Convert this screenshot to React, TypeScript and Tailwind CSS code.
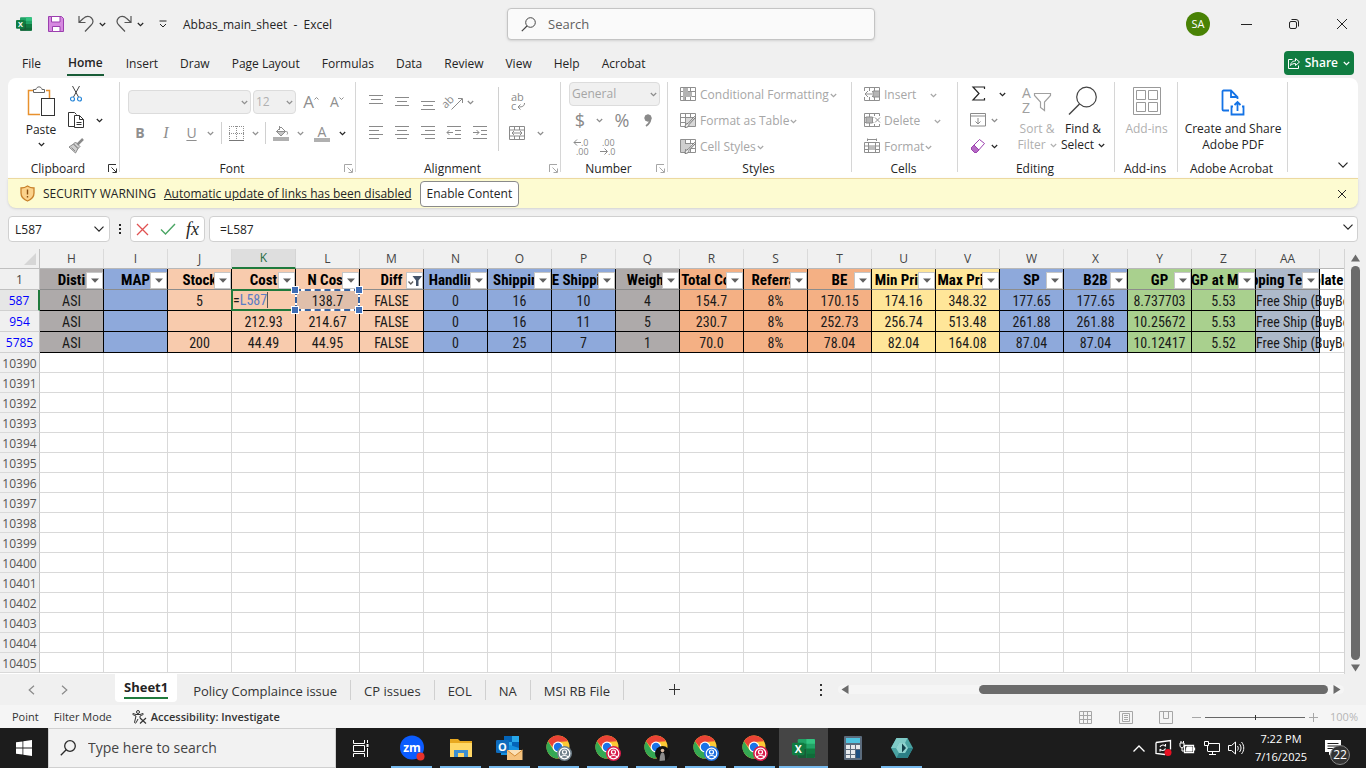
import React from "react";
import type { ReactNode } from "react";

type SvgProps = { w: number; h?: number; className?: string; children: ReactNode; sw?: number };

function Icon({ w, h = w, className = "", children, sw = 1 }: SvgProps) {
  return (
    <svg
      width={w}
      height={h}
      viewBox={`0 0 ${w} ${h}`}
      fill="none"
      stroke="currentColor"
      strokeWidth={sw}
      className={`shrink-0 overflow-visible ${className}`}
      aria-hidden="true"
    >
      {children}
    </svg>
  );
}

function Chev({ className = "" }: { className?: string }) {
  return (
    <Icon w={7} h={5} className={className}>
      <path d="M.8 1 3.5 3.6 6.2 1" strokeWidth="1.2" />
    </Icon>
  );
}

function BigChev({ className = "" }: { className?: string }) {
  return (
    <Icon w={10} h={6} className={className}>
      <path d="M.5.7 5 5.2 9.5.7" strokeWidth="1.2" />
    </Icon>
  );
}

function ExcelLogo({ size }: { size: number }) {
  return (
    <svg width={size} height={size} viewBox="0 0 24 24" className="shrink-0" aria-hidden="true">
      <rect x="6" y="2" width="18" height="20" rx="1.5" fill="#21a366" />
      <path d="M15 2h7.500a1.500 1.500 0 0 1 1.500 1.500V7h-9z" fill="#33c481" />
      <path d="M6 7h9v5H6z" fill="#107c41" />
      <path d="M15 12h9v5h-9z" fill="#107c41" />
      <path d="M6 12h9v10H7.500A1.500 1.500 0 0 1 6 20.500z" fill="#185c37" />
      <path d="M15 17h9v3.500a1.500 1.500 0 0 1-1.500 1.500H15z" fill="#0f6b38" />
      <rect x="0" y="6" width="13" height="13" rx="1.500" fill="#107c41" />
      <text x="6.500" y="16.500" textAnchor="middle" fontSize="11" fontWeight="700" fill="#fff" fontFamily="Open Sans, sans-serif">
        X
      </text>
    </svg>
  );
}

function Launcher({ dim = true }: { dim?: boolean }) {
  return (
    <button type="button" aria-label="More options" className={dim ? "text-[#a6a6a6]" : "text-[#333333]"}>
      <Icon w={9}>
        <path d="M.5 8V.5H8M3.500 3.500l4.500 4.500M8.500 4.500v4h-4" />
      </Icon>
    </button>
  );
}

function Group({ name, width, launcher, children }: { name: string; width: string; launcher?: "dim" | "on"; children: ReactNode }) {
  return (
    <section aria-label={name} className={`relative flex shrink-0 flex-col pt-[3px] ${width}`}>
      <div className="h-[78px]">{children}</div>
      <div className="flex h-[18px] items-center pr-[3px]">
        <span className="flex-1 pt-px text-center whitespace-nowrap text-[#242424]">{name}</span>
        {launcher && <Launcher dim={launcher === "dim"} />}
      </div>
      <span className="absolute top-1 right-0 h-[90px] w-px bg-[#d6d6d6]" />
    </section>
  );
}

function Tool({ label, width = "w-[26px]", className = "", children }: { label: string; width?: string; className?: string; children: ReactNode }) {
  return (
    <button type="button" aria-label={label} className={`flex h-[26px] shrink-0 items-center justify-center ${width} ${className}`}>
      {children}
    </button>
  );
}

function LineIcon({ rows }: { rows: [number, number, number][] }) {
  return (
    <Icon w={16}>
      {rows.map(([y, a, b]) => (
        <path key={y} d={`M${a} ${y}H${b}`} />
      ))}
    </Icon>
  );
}

type TableKind = "cond" | "table" | "cell" | "insert" | "delete" | "format";

function TableIcon({ kind }: { kind: TableKind }) {
  return (
    <Icon w={16} className="text-[#8f8f8f]">
      {kind === "format" ? (
        <>
          <path d="M.5 4.500h15v10H.5zM.5 8h15M.5 11.500h15M4.500 4.500v10M11.500 4.500v10M3.500 3V.5M12.500 3V.5M4 1.500h8" />
          <path d="M5 8h6v4H5z" fill="#bdbdbd" stroke="none" />
        </>
      ) : (
        <>
          <path d="M.5 1.500h15v13H.5zM.5 5.500h15M.5 10.500h15M5.500 1.500v13M10.500 1.500v13" />
          {kind === "cond" && <path d="M3 2h5v4h4v5H5v3H3z" fill="#b3b3b3" stroke="none" />}
          {kind === "table" && <path d="M6 6h9v8H6z" fill="#d8d8d8" stroke="none" />}
          {kind === "cell" && <path d="M1 2h4v12H1zM5 6h6v5H5z" fill="#cfcfcf" stroke="none" />}
          {(kind === "table" || kind === "cell") && <path d="M5 15.500c0-3 1.500-4 3-4l6.500-7 1 1-6.500 7c0 2-1.500 3-4 3z" fill="#efefef" stroke="#777" />}
          {kind === "insert" && (
            <>
              <path d="M0 5h8v6H0z" fill="#fff" stroke="none" />
              <path d="M9 5h6.500v6H9z" fill="#b5b5b5" />
              <path d="M8 8H1M4 5 1 8l3 3" />
            </>
          )}
          {kind === "delete" && (
            <>
              <path d="M9.500 4H16v8H9.500z" fill="#fff" stroke="none" />
              <path d="M2 5h6.500v6H2z" fill="#b5b5b5" />
              <path d="m11 5.500 5 5M16 5.500l-5 5" />
            </>
          )}
        </>
      )}
    </Icon>
  );
}

function TextTool({ kind, label, gap = "gap-1" }: { kind: TableKind; label: string; gap?: string }) {
  return (
    <button type="button" className="flex h-[26px] items-center gap-1 whitespace-nowrap text-[#a6a6a6]">
      <TableIcon kind={kind} />
      <span className={`flex items-center pt-[2px] ${gap}`}>
        {label}
        <Chev />
      </span>
    </button>
  );
}

function Divider({ h = "h-[22px]" }: { h?: string }) {
  return <span className={`w-px shrink-0 bg-[#d0d0d0] ${h}`} />;
}

const tabs = ["File", "Home", "Insert", "Draw", "Page Layout", "Formulas", "Data", "Review", "View", "Help", "Acrobat"];

function TitleBar() {
  return (
    <header className="flex h-12 shrink-0 items-center text-[#242424]">
      <div className="flex w-[507px] shrink-0 items-center pl-4">
        <ExcelLogo size={16} />
        <button type="button" aria-label="Save" className="ml-4">
          <Icon w={16}>
            <path d="M.5.5h13l2 2v13H.5z" fill="#d689e0" stroke="#9b3fae" />
            <path d="M3.500.5h8.500v5.500H3.500z" fill="#fff" stroke="#9b3fae" />
            <path d="M4.500 15.500v-5h7.500v5z" fill="#fff" stroke="#9b3fae" />
          </Icon>
        </button>
        <button type="button" aria-label="Undo" className="ml-[14px] flex items-center gap-[5px]">
          <Icon w={16} className="text-[#555]">
            <path d="M1 0v6.500h6.500M1.200 6.300 5.500 2.300C8-.2 11.500-.2 13.500 2c2 2.300 1.700 5-.3 7L7 15.500" strokeWidth="1.2" />
          </Icon>
          <Chev />
        </button>
        <button type="button" aria-label="Redo" className="ml-[10px] flex items-center gap-[5px]">
          <Icon w={16} className="text-[#555]">
            <path d="M15 0v6.500H8.500M14.800 6.300 10.500 2.300C8-.2 4.500-.2 2.500 2c-2 2.300-1.700 5 .3 7L9 15.500" strokeWidth="1.2" />
          </Icon>
          <Chev />
        </button>
        <button type="button" aria-label="Customize toolbar" className="ml-[15px]">
          <Icon w={8}>
            <path d="M.5 1h7M1 4l3 3 3-3" />
          </Icon>
        </button>
        <h1 className="ml-4 pt-[2px] text-xs whitespace-pre">Abbas_main_sheet  -  Excel</h1>
      </div>
      <label className="flex h-8 w-[368px] shrink-0 items-center gap-3 rounded border border-[#c4c4c4] bg-[#fafafa] px-[13px] shadow-sm">
        <Icon w={15} className="text-[#444]">
          <circle cx="9.500" cy="5.500" r="4.800" />
          <path d="M6 9 .8 14.200" strokeWidth="1.2" />
        </Icon>
        <input aria-label="Search" placeholder="Search" className="w-full bg-transparent pt-[2px] text-[13px] outline-none placeholder:text-[#616161]" />
      </label>
      <div className="ml-auto flex items-center pr-[18px]">
        <button type="button" className="mr-[31px] flex size-6 items-center justify-center rounded-full bg-[#498205] text-[11px] text-white">SA</button>
        <button type="button" aria-label="Minimize" className="mr-[37px]">
          <Icon w={11}><path d="M0 5.500h11" /></Icon>
        </button>
        <button type="button" aria-label="Restore" className="mr-[37px]">
          <Icon w={10}>
            <rect x=".5" y="2.500" width="7" height="7" rx="1.500" />
            <path d="M2.500.5H7A2.500 2.500 0 0 1 9.500 3v4.500" />
          </Icon>
        </button>
        <button type="button" aria-label="Close">
          <Icon w={12}><path d="m1 1 10 10M11 1 1 11" /></Icon>
        </button>
      </div>
    </header>
  );
}

function TabBar() {
  return (
    <nav className="flex h-[30px] shrink-0 items-center pr-3 pl-[22px] text-[#242424]">
      <div className="flex items-center gap-[22px] pt-[2px] text-xs">
        {tabs.map((t) => (
          <a
            key={t}
            href="#"
            className={
              t === "Home"
                ? "ml-1 border-b-2 border-[#185c37] px-px leading-[22px] font-semibold whitespace-nowrap"
                : "leading-5 whitespace-nowrap"
            }
          >
            {t}
          </a>
        ))}
      </div>
      <button type="button" className="ml-auto flex h-6 items-center gap-[5px] rounded bg-[#107c41] px-1 text-xs font-semibold text-white">
        <Icon w={12}>
          <path d="M4.500 2.500h-4v9h10v-3" />
          <path d="M2.500 8.500C3 5 5 4 7.500 4V1.500l4 3.500-4 3.500V6.500c-2 0-3.500.5-5 2z" />
        </Icon>
        Share
        <Chev />
      </button>
    </nav>
  );
}

function Ribbon() {
  return (
    <div className="flex h-[100px] overflow-hidden rounded-t-lg bg-white text-xs leading-4 text-[#242424]">
      <Group name="Clipboard" width="w-[112px]" launcher="on">
        <div className="flex">
          <button type="button" className="ml-3 flex w-[42px] flex-col items-center pt-[5px]">
            <Icon w={28} h={31}>
              <path d="M7 4.500H1.500v24H13M19 4.500h3.500V12" stroke="#e8912d" strokeWidth="1.500" />
              <path d="M6.500 6.500v-3H9c.5-3.500 5.500-3.500 6 0h2.500v3z" fill="#fff" stroke="#666" />
              <rect x="14.500" y="12.500" width="13" height="17" fill="#fff" stroke="#333" />
            </Icon>
            <span className="mt-[5px]">Paste</span>
            <Chev className="mt-1" />
          </button>
          <div className="ml-[6px]">
            <Tool label="Cut" width="w-4">
              <Icon w={12} h={16}>
                <path d="M2.500 0 8.500 11M9.500 0l-6 11" stroke="#444" />
                <circle cx="2.500" cy="13" r="2" stroke="#2b88d8" strokeWidth="1.200" />
                <circle cx="9.500" cy="13" r="2" stroke="#2b88d8" strokeWidth="1.200" />
              </Icon>
            </Tool>
            <Tool label="Copy" width="w-[35px]" className="gap-[11px]">
              <Icon w={17} h={16} className="text-[#333]">
                <path d="M6.500 14.500h-6V.5h6l2 2" />
                <path d="M6.500 3.500h5l4 4v8h-9zM11.500 3.500v4h4M8.500 10.500h5M8.500 12.500h5" />
              </Icon>
              <Chev />
            </Tool>
            <Tool label="Format Painter" width="w-4">
              <Icon w={16} className="text-[#8a8a8a]">
                <path d="M1 9 7.500 15l2.500-4.500L5.500 6zM5.500 6l4.500 4.500 2-2L7.500 4zM3.500 9.500l3.500 3.500" fill="#d0d0d0" />
                <path d="m15 1-5.500 5.500" strokeWidth="2.500" />
              </Icon>
            </Tool>
          </div>
        </div>
      </Group>

      <Group name="Font" width="w-[236px]" launcher="dim">
        <div className="flex flex-col gap-[5px] px-2 pt-2 text-[#8f8f8f]">
          <div className="flex h-[26px] items-center">
            <span className="relative flex items-center">
              <select aria-label="Font" className="h-6 w-[123px] appearance-none rounded border border-[#dcdcdc] bg-[#f0f0f0]">
                <option />
              </select>
              <Chev className="absolute right-[3px]" />
            </span>
            <span className="relative ml-[2px] flex items-center">
              <select aria-label="Font size" className="h-6 w-[43px] appearance-none rounded border border-[#dcdcdc] bg-[#f0f0f0] pl-[2px] text-[#b0b0b0]">
                <option>12</option>
              </select>
              <Chev className="absolute right-[3px]" />
            </span>
            <Tool label="Increase font size" width="w-[26px]" className="ml-[2px]">
              <span className="text-[17px]">A</span>
              <Icon w={5} h={12}><path d="m.5 3.500 2-2 2 2" /></Icon>
            </Tool>
            <Tool label="Decrease font size" width="w-[26px]">
              <span className="text-sm">A</span>
              <Icon w={5} h={12}><path d="m.5 1.500 2 2 2-2" /></Icon>
            </Tool>
          </div>
          <div className="flex h-[26px] items-center text-sm">
            <Tool label="Bold" width="w-6" className="font-bold">B</Tool>
            <Tool label="Italic" width="w-7" className="font-['Liberation_Serif',serif] text-base italic">I</Tool>
            <Tool label="Underline" width="w-[23px]" className="underline underline-offset-2">U</Tool>
            <Tool label="Underline options" width="w-[15px]"><Chev /></Tool>
            <span className="w-[3px]" />
            <Divider />
            <Tool label="Borders" width="w-7">
              <Icon w={15}>
                <path d="M.5 0v14M14.500 0v14M7.500 0v14M0 .5h15M0 7.500h15" strokeDasharray="1 1" />
                <path d="M0 14.500h15" stroke="#777" />
              </Icon>
            </Tool>
            <Tool label="Border options" width="w-[10px]"><Chev /></Tool>
            <span className="w-[5px]" />
            <Divider />
            <Tool label="Fill color" width="w-[30px]">
              <Icon w={16}>
                <path d="M0 14h16" stroke="#b0b0b0" strokeWidth="4" />
                <path d="M6.500 1v4M3.500 6.500 8 2l4.500 4.500L8 11z" />
                <path d="M3.500 6.500h9L8 11z" fill="#c5c5c5" />
                <path d="M13.500 6c1 1.500 1.500 2.500.5 3.500" />
              </Icon>
            </Tool>
            <Tool label="Fill options" width="w-2"><Chev /></Tool>
            <Tool label="Font color" width="w-9">
              <span className="flex w-4 flex-col items-center border-b-4 border-[#b0b0b0] text-sm leading-[13px]">A</span>
            </Tool>
            <Tool label="Font color options" width="w-1" className="text-[#242424]"><Chev /></Tool>
          </div>
        </div>
      </Group>

      <Group name="Alignment" width="w-[205px]" launcher="dim">
        <div className="flex items-start pt-[6px] pl-[7px] text-[#8a8a8a]">
          <div className="flex w-[135px] flex-col gap-[5px]">
            <div className="flex pt-[2px]">
              <Tool label="Top align"><LineIcon rows={[[1.5, 1, 15], [5.5, 3, 13], [9.5, 1, 15]]} /></Tool>
              <Tool label="Middle align"><LineIcon rows={[[3.5, 1, 15], [7.5, 3, 13], [11.5, 1, 15]]} /></Tool>
              <Tool label="Bottom align"><LineIcon rows={[[7.5, 1, 15], [11.5, 3, 13], [15.5, 1, 15]]} /></Tool>
              <Tool label="Orientation">
                <Icon w={18} h={16}>
                  <path d="M6.500 15.500 17 5M13 4.500h4.500V9" />
                  <text x="-3" y="10" transform="rotate(-45 5 8)" fontSize="11" fill="currentColor" stroke="none" fontFamily="Open Sans, sans-serif">ab</text>
                </Icon>
              </Tool>
              <Tool label="Orientation options" width="w-[6px]"><Chev /></Tool>
            </div>
            <div className="flex">
              <Tool label="Align left"><LineIcon rows={[[1.5, 1, 15], [5.5, 1, 11], [9.5, 1, 15], [13.5, 1, 11]]} /></Tool>
              <Tool label="Center"><LineIcon rows={[[1.5, 1, 15], [5.5, 3, 13], [9.5, 1, 15], [13.5, 3, 13]]} /></Tool>
              <Tool label="Align right"><LineIcon rows={[[1.5, 1, 15], [5.5, 5, 15], [9.5, 1, 15], [13.5, 5, 15]]} /></Tool>
              <Tool label="Decrease indent">
                <Icon w={16}><path d="M1 1.500h14M9 5.500h6M9 9.500h6M1 13.500h14M7 7.500H1M3.500 5 1 7.500 3.500 10" /></Icon>
              </Tool>
              <Tool label="Increase indent">
                <Icon w={16}><path d="M1 1.500h14M9 5.500h6M9 9.500h6M1 13.500h14M1 7.500h6M4.500 5 7 7.500 4.500 10" /></Icon>
              </Tool>
            </div>
          </div>
          <Divider h="h-16" />
          <div className="ml-1 flex flex-col gap-[5px] pt-[2px]">
            <Tool label="Wrap text" width="w-[30px]">
              <Icon w={16} h={18}>
                <text x="1" y="8" fontSize="11" fill="currentColor" stroke="none" fontFamily="Open Sans, sans-serif">ab</text>
                <text x="1" y="17" fontSize="11" fill="currentColor" stroke="none" fontFamily="Open Sans, sans-serif">c</text>
                <path d="M14.500 10c0 3-2 4-6 4M10.500 11.500 8 14l2.500 2.500" />
              </Icon>
            </Tool>
            <div className="flex">
              <Tool label="Merge and center" width="w-7">
                <Icon w={16}>
                  <path d="M.5 1.500h15v13H.5zM.5 5h15M.5 11h15M5.500 1.500V5M10.500 1.500V5M5.500 11v3.500M10.500 11v3.500" />
                  <path d="M3 8h10M5 6 3 8l2 2M11 6l2 2-2 2" />
                </Icon>
              </Tool>
              <Tool label="Merge options" width="w-[18px]"><Chev /></Tool>
            </div>
          </div>
        </div>
      </Group>

      <Group name="Number" width="w-[107px]" launcher="dim">
        <div className="pl-2 text-[#8a8a8a]">
          <span className="relative flex h-[26px] w-[91px] items-center">
            <select aria-label="Number format" className="h-6 w-full appearance-none rounded border border-[#dcdcdc] bg-[#f0f0f0] pl-[2px] text-[#a6a6a6]">
              <option>General</option>
            </select>
            <Chev className="absolute right-[3px]" />
          </span>
          <div className="flex items-center text-lg">
            <Tool label="Accounting format" width="w-[22px]">$</Tool>
            <Tool label="Accounting options" width="w-4"><Chev /></Tool>
            <Tool label="Percent" width="w-[30px]">%</Tool>
            <Tool label="Comma" width="w-[22px]">
              <Icon w={8} h={13}>
                <circle cx="4" cy="4" r="3.200" fill="currentColor" />
                <path d="M6.500 4c0 4-1.500 6-4.500 8" strokeWidth="1.800" />
              </Icon>
            </Tool>
          </div>
          <div className="flex">
            <Tool label="Increase decimal">
              <Icon w={16}>
                <path d="M7 4.500H0M3 1.500l-3 3 3 3" />
                <text x="7" y="8" fontSize="9" fill="currentColor" stroke="none" fontFamily="Open Sans, sans-serif">.0</text>
                <text x="2" y="17" fontSize="9" fill="currentColor" stroke="none" fontFamily="Open Sans, sans-serif">.00</text>
              </Icon>
            </Tool>
            <Tool label="Decrease decimal">
              <Icon w={16}>
                <path d="M0 13.500h7M4.500 10.500l3 3-3 3" />
                <text x="2" y="8" fontSize="9" fill="currentColor" stroke="none" fontFamily="Open Sans, sans-serif">.00</text>
                <text x="8" y="17" fontSize="9" fill="currentColor" stroke="none" fontFamily="Open Sans, sans-serif">.0</text>
              </Icon>
            </Tool>
          </div>
        </div>
      </Group>

      <Group name="Styles" width="w-[184px]">
        <div className="pl-3">
          <TextTool kind="cond" label="Conditional Formatting" gap="gap-px" />
          <TextTool kind="table" label="Format as Table" gap="gap-px" />
          <TextTool kind="cell" label="Cell Styles" gap="gap-px" />
        </div>
      </Group>

      <Group name="Cells" width="w-[106px]">
        <div className="pl-3">
          <TextTool kind="insert" label="Insert" gap="gap-[14px]" />
          <TextTool kind="delete" label="Delete" gap="gap-[14px]" />
          <TextTool kind="format" label="Format" gap="gap-px" />
        </div>
      </Group>

      <Group name="Editing" width="w-[157px]">
        <div className="flex pl-3">
          <div>
            <Tool label="AutoSum" width="w-9" className="gap-3">
              <Icon w={16} h={16}><path d="M13.500 3V1H2l6 6.500L2 14h11.500v-2" strokeWidth="1.200" /></Icon>
              <Chev />
            </Tool>
            <Tool label="Fill" width="w-7" className="gap-[5px] text-[#8a8a8a]">
              <Icon w={16} h={14}>
                <path d="M.5.5h15v12.500H.5zM.5 3h15M8 5v6M5.500 8.500 8 11l2.500-2.500" />
              </Icon>
              <Chev />
            </Tool>
            <Tool label="Clear" width="w-7" className="gap-[5px]">
              <Icon w={16}>
                <path d="M1.500 9.500 9.500 1.500l5 4-8 9h-2l-3-3z" fill="#fff" stroke="#9b3fae" />
                <path d="M1.500 9.500 4 7l5 5-2.500 2.500h-2l-3-3z" fill="#b56ac4" stroke="#9b3fae" />
              </Icon>
              <Chev />
            </Tool>
          </div>
          <button type="button" className="ml-[8px] flex w-[46px] flex-col items-center pt-[5px] text-[#b0b0b0]">
            <Icon w={30} className="text-[#a0a0a0]">
              <text x="0" y="12" fontSize="14" fill="currentColor" stroke="none" fontFamily="Open Sans, sans-serif">A</text>
              <text x="0" y="27" fontSize="14" fill="currentColor" stroke="none" fontFamily="Open Sans, sans-serif">Z</text>
              <path d="M12.500 7.500h16v2L22.500 16v8.500l-4-3V16l-6-6.500z" strokeWidth="1.200" />
            </Icon>
            <span className="mt-[5px] whitespace-nowrap">Sort &amp;</span>
            <span className="flex items-center gap-1">Filter <Chev /></span>
          </button>
          <button type="button" className="flex w-[46px] flex-col items-center pt-[5px]">
            <Icon w={30} className="text-[#444]">
              <circle cx="18.500" cy="11" r="9.800" strokeWidth="1.200" />
              <path d="M11.500 18 1 28.500" strokeWidth="1.400" />
            </Icon>
            <span className="mt-[5px] whitespace-nowrap">Find &amp;</span>
            <span className="flex items-center gap-1">Select <Chev /></span>
          </button>
        </div>
      </Group>

      <Group name="Add-ins" width="w-[63px]">
        <button type="button" className="flex w-full flex-col items-center pt-[5px] text-[#b0b0b0]">
          <Icon w={28} h={30} className="text-[#999]">
            <path d="M.5 1.500h27v27H.5zM3.500 4.500h9v9h-9zM15.500 4.500h9v9h-9zM3.500 16.500h9v9h-9zM15.500 16.500h9v9h-9z" />
          </Icon>
          <span className="mt-[5px] whitespace-nowrap">Add-ins</span>
        </button>
      </Group>

      <Group name="Adobe Acrobat" width="w-[110px]">
        <button type="button" className="flex w-full flex-col items-center pt-2">
          <Icon w={24} h={28} className="text-[#1473e6]">
            <path d="M8 21.500H2.500a1 1 0 0 1-1-1v-18a1 1 0 0 1 1-1H10l6.500 6.500v2M10 1.500V8h6.500" strokeWidth="1.800" />
            <path d="M12 17.500h-1.500v8h12v-8H21M16.500 22v-8.500M13.500 16l3-3 3 3" strokeWidth="1.800" />
          </Icon>
          <span className="mt-1 whitespace-nowrap">Create and Share</span>
          <span className="whitespace-nowrap">Adobe PDF</span>
        </button>
      </Group>
      <button type="button" aria-label="Collapse ribbon" className="mt-auto mr-[10px] mb-[10px] ml-auto">
        <BigChev />
      </button>
    </div>
  );
}

function WarningBar() {
  return (
    <div role="alert" className="flex h-[30px] items-center rounded-b-lg border-t border-[#ecd9a0] bg-[#fdfbd1] pr-[11px] pl-3 text-xs text-[#242424] shadow">
      <Icon w={15} h={17}>
        <path d="M7.500 1c2 1.500 4 2 6.500 2v5c0 4-2.500 6.500-6.500 8C3.500 14.500 1 12 1 8V3c2.500 0 4.500-.5 6.500-2z" fill="#fbd28b" stroke="#c8802a" strokeWidth="1.300" />
        <path d="M7.500 4.500v5M7.500 11v1.500" stroke="#8a4f10" strokeWidth="1.400" />
      </Icon>
      <span className="ml-2">SECURITY WARNING</span>
      <a href="#" className="ml-2 underline">Automatic update of links has been disabled</a>
      <button type="button" className="ml-2 h-[26px] rounded border border-[#8a8a8a] bg-white px-[6px]">Enable Content</button>
      <button type="button" aria-label="Dismiss" className="ml-auto">
        <Icon w={10}><path d="m1 1 8 8M9 1 1 9" /></Icon>
      </button>
    </div>
  );
}

function FormulaBar() {
  return (
    <div className="flex h-[41px] shrink-0 items-start px-2 pt-2 text-xs text-[#242424]">
      <div className="flex h-[26px] w-[102px] items-center rounded border border-[#d0d0d0] bg-white pr-[5px]">
        <input aria-label="Name box" defaultValue="L587" className="w-full min-w-0 bg-transparent pt-[2px] pl-[6px] outline-none" />
        <button type="button" aria-label="Names"><BigChev /></button>
      </div>
      <Icon w={20} h={26}>
        <path d="M9 8h2v2H9zM9 12h2v2H9zM9 16h2v2H9z" fill="currentColor" stroke="none" />
      </Icon>
      <div className="flex h-[26px] w-[75px] items-center justify-between rounded border border-[#d0d0d0] bg-white px-[5px]">
        <button type="button" aria-label="Cancel">
          <Icon w={13} className="text-[#e05252]"><path d="m1 1 11 11M12 1 1 12" strokeWidth="1.300" /></Icon>
        </button>
        <button type="button" aria-label="Enter">
          <Icon w={16} h={12} className="text-[#4aa564]"><path d="M1 6.500 5.500 11 15 1" strokeWidth="1.400" /></Icon>
        </button>
        <button type="button" className="font-['Liberation_Serif',serif] text-lg leading-5 italic">fx</button>
      </div>
      <div className="ml-1 flex h-[26px] flex-1 items-center rounded border border-[#d0d0d0] bg-white pr-1">
        <input aria-label="Formula" defaultValue="=L587" className="w-full bg-transparent pt-[2px] pl-[10px] outline-none" />
        <button type="button" aria-label="Expand formula bar"><BigChev className="mb-1" /></button>
      </div>
    </div>
  );
}

const GRAY = "bg-[#aeaaaa]";
const BLUE = "bg-[#8ea9db]";
const PEACH = "bg-[#f8cbad]";
const ORANGE = "bg-[#f4b084]";
const YELLOW = "bg-[#ffe699]";
const GREEN = "bg-[#a9d08e]";
const SLATE = "bg-[#adb9ca]";

const columns: { id: string; title: string; color: string; values: string[] }[] = [
  { id: "H", title: "Disti", color: GRAY, values: ["ASI", "ASI", "ASI"] },
  { id: "I", title: "MAP", color: BLUE, values: ["", "", ""] },
  { id: "J", title: "Stock", color: PEACH, values: ["5", "", "200"] },
  { id: "K", title: "Cost", color: PEACH, values: ["=L587", "212.93", "44.49"] },
  { id: "L", title: "N Cost", color: PEACH, values: ["138.7", "214.67", "44.95"] },
  { id: "M", title: "Diff", color: PEACH, values: ["FALSE", "FALSE", "FALSE"] },
  { id: "N", title: "Handling", color: BLUE, values: ["0", "0", "0"] },
  { id: "O", title: "Shipping", color: BLUE, values: ["16", "16", "25"] },
  { id: "P", title: "E Shipping", color: BLUE, values: ["10", "11", "7"] },
  { id: "Q", title: "Weight", color: GRAY, values: ["4", "5", "1"] },
  { id: "R", title: "Total Cost", color: ORANGE, values: ["154.7", "230.7", "70.0"] },
  { id: "S", title: "Referral", color: ORANGE, values: ["8%", "8%", "8%"] },
  { id: "T", title: "BE", color: ORANGE, values: ["170.15", "252.73", "78.04"] },
  { id: "U", title: "Min Price", color: YELLOW, values: ["174.16", "256.74", "82.04"] },
  { id: "V", title: "Max Price", color: YELLOW, values: ["348.32", "513.48", "164.08"] },
  { id: "W", title: "SP", color: BLUE, values: ["177.65", "261.88", "87.04"] },
  { id: "X", title: "B2B", color: BLUE, values: ["177.65", "261.88", "87.04"] },
  { id: "Y", title: "GP", color: GREEN, values: ["8.737703", "10.25672", "10.12417"] },
  { id: "Z", title: "GP at MAP", color: GREEN, values: ["5.53", "5.53", "5.52"] },
  { id: "AA", title: "Shipping Template", color: SLATE, values: ["Free Ship (BuyBox)", "Free Ship (BuyBox)", "Free Ship (BuyBox)"] },
];
const filtered = ["587", "954", "5785"];
const emptyRows = Array.from({ length: 16 }, (_, i) => String(10390 + i));

function FilterButton({ active }: { active: boolean }) {
  return (
    <button type="button" aria-label="Filter" className="absolute top-[3px] right-0 flex size-[17px] items-center justify-center border border-[#c6c6c6] bg-white text-[#5f5f5f]">
      {active ? (
        <Icon w={14} h={12}>
          <path d="M4.500 1H14l-3.500 4.500V11H8V5.500z" fill="#44546a" stroke="none" />
          <path d="m.5 6.500 2.300 2.500 2.300-2.500" strokeWidth="1.300" />
        </Icon>
      ) : (
        <Icon w={8} h={5}><path d="M0 .5h8L4 4.800z" fill="currentColor" stroke="none" /></Icon>
      )}
    </button>
  );
}

function Handle({ className }: { className: string }) {
  return <span className={`absolute z-30 size-[6px] bg-[#3f6db5] outline outline-white ${className}`} />;
}

function CellContent({ id, row, value }: { id: string; row: number; value: string }) {
  if (id === "AA") return <div className="relative w-[88px] overflow-hidden pt-[2px] whitespace-nowrap">{value}</div>;
  if (id === "K" && row === 0)
    return (
      <div className="relative h-5">
        <div className="absolute -top-[1px] -right-[2px] -bottom-[1px] -left-[1px] z-10 border-2 border-[#1f7a3d] text-left leading-[19px]">
          =<span className="border-r border-[#555] text-[#5b7dc4]">L587</span>
        </div>
      </div>
    );
  if (id === "L" && row === 0)
    return (
      <div className="relative bg-[#e0bfab] pt-[2px]">
        {value}
        <span className="absolute -inset-px z-20 border-2 border-white" />
        <span className="absolute -inset-px z-20 border-2 border-dashed border-[#35619f]" />
        <Handle className="-top-[3px] -left-[4px]" />
        <Handle className="-top-[3px] -right-[3px]" />
        <Handle className="-bottom-[3px] -left-[4px]" />
        <Handle className="-right-[3px] -bottom-[3px]" />
      </div>
    );
  return <div className="pt-[2px]">{value}</div>;
}

function Grid() {
  return (
    <div className="flex min-h-0 flex-1 overflow-hidden">
      <div className="min-w-0 flex-1 overflow-hidden border-r border-[#d4d4d4] bg-white">
        <table className="w-full table-fixed border-separate border-spacing-0">
          <colgroup>
            <col className="w-10" />
            {columns.map((c) => (
              <col key={c.id} className="w-16" />
            ))}
            <col />
          </colgroup>
          <thead>
            <tr className="h-5 bg-[#f0f0f0] text-xs leading-[18px] text-[#444]">
              <th scope="col" className="border-r border-b border-[#c0c0c0] font-normal">
                <span className="flex justify-end pr-[3px]">
                  <Icon w={12}><path d="M12 0v12H0z" fill="#d6d6d6" stroke="none" /></Icon>
                </span>
              </th>
              {columns.map((c) => (
                <th
                  key={c.id}
                  scope="col"
                  className={
                    c.id === "K"
                      ? "border-r border-b-2 border-r-[#d4d4d4] border-b-[#1f7a3d] bg-[#dedede] p-0 font-normal text-[#1f6b3f]"
                      : "border-r border-b border-r-[#dadada] border-b-[#b8b8b8] p-0 pt-px font-normal"
                  }
                >
                  {c.id}
                </th>
              ))}
              <th scope="col" aria-label="AB" className="border-b border-[#b8b8b8] p-0" />
            </tr>
          </thead>
          <tbody>
            <tr className="h-[21px]">
              <th scope="row" className="border-r border-b border-[#c0c0c0] bg-[#f0f0f0] p-0 pt-[2px] text-xs leading-[18px] font-normal text-[#444]">1</th>
              {columns.map((c) => (
                <td key={c.id} className={`relative border-r border-b border-r-black border-b-[#8c8c8c] p-0 font-['Roboto_Condensed','Liberation_Sans_Narrow','Liberation_Sans',sans-serif] text-[15px] leading-[18px] font-bold text-black ${c.color}`}>
                  {c.id === "AA" ? (
                    <div className="relative w-[88px] overflow-hidden pt-[2px]">
                      <div className="flex w-[63px] justify-center whitespace-nowrap">{c.title}</div>
                    </div>
                  ) : (
                    <div className="flex justify-center overflow-hidden pt-[2px] whitespace-nowrap">{c.title}</div>
                  )}
                  <FilterButton active={c.id === "M"} />
                </td>
              ))}
              <td className="border-b border-[#c0c0c0]" />
            </tr>
            {filtered.map((n, r) => (
              <tr key={n} className="h-[21px]">
                <th
                  scope="row"
                  className={
                    r === 0
                      ? "border-r-2 border-b border-r-[#1f7a3d] border-b-[#d0d0d0] bg-[#e6e6e6] p-0 pt-[2px] text-xs leading-[18px] font-normal text-[#0000ff]"
                      : "border-r border-b border-r-[#c0c0c0] border-b-[#d0d0d0] bg-[#f0f0f0] p-0 pt-[2px] text-xs leading-[18px] font-normal text-[#0000ff]"
                  }
                >
                  {n}
                </th>
                {columns.map((c) => (
                  <td key={c.id} className={`border-r border-b border-black p-0 text-center font-['Roboto_Condensed','Liberation_Sans_Narrow','Liberation_Sans',sans-serif] text-[14px] leading-[18px] text-[#1a1a1a] ${c.color}`}>
                    <CellContent id={c.id} row={r} value={c.values[r]} />
                  </td>
                ))}
                <td className="border-b border-[#d9d9d9]" />
              </tr>
            ))}
            {emptyRows.map((n) => (
              <tr key={n} className="h-5">
                <th scope="row" className="border-r border-b border-r-[#c0c0c0] border-b-[#d9d9d9] bg-[#f0f0f0] p-0 pt-[2px] text-xs leading-[17px] font-normal text-[#555]">{n}</th>
                {columns.map((c) => (
                  <td key={c.id} className="border-r border-b border-[#d9d9d9] p-0" />
                ))}
                <td className="border-b border-[#d9d9d9] p-0" />
              </tr>
            ))}
          </tbody>
        </table>
      </div>
      <div className="flex w-[21px] flex-col items-center pt-[5px] pb-[2px] text-[#6b6b6b]">
        <Icon w={9} h={8}><path d="M4.500.5 9 7.500H0z" fill="currentColor" stroke="none" /></Icon>
        <span className="my-1 w-[9px] flex-1 rounded-full bg-[#6b6b6b]" />
        <Icon w={9} h={8}><path d="M4.500 7.500 9 .5H0z" fill="currentColor" stroke="none" /></Icon>
      </div>
    </div>
  );
}

function SheetTabs() {
  const sheets = ["Policy Complaince issue", "CP issues", "EOL", "NA", "MSI RB File"];
  return (
    <nav aria-label="Sheets" className="flex h-[31px] shrink-0 items-center text-[13px] text-[#333]">
      <button type="button" aria-label="Previous sheet" className="ml-7 text-[#8a8a8a]">
        <Icon w={7} h={10}><path d="M6 .8 1.200 5 6 9.200" strokeWidth="1.200" /></Icon>
      </button>
      <button type="button" aria-label="Next sheet" className="ml-[26px] text-[#8a8a8a]">
        <Icon w={7} h={10}><path d="M1 .8 5.800 5 1 9.200" strokeWidth="1.200" /></Icon>
      </button>
      <a href="#" className="mb-[3px] ml-[47px] flex h-[28px] items-center rounded-b bg-white px-[9px] font-bold text-[#242424]">
        <span className="border-b-2 border-[#1f7a3d] leading-5">Sheet1</span>
      </a>
      <div className="ml-[3px] flex items-center">
        {sheets.map((s) => (
          <a key={s} href="#" className="border-r border-[#d0d0d0] px-[13px] pt-[2px] leading-[18px] whitespace-nowrap">{s}</a>
        ))}
      </div>
      <button type="button" aria-label="New sheet" className="ml-[45px]">
        <Icon w={11}><path d="M5.500 0v11M0 5.500h11" /></Icon>
      </button>
      <Icon w={4} h={12} className="ml-auto">
        <path d="M1 0h2v2H1zM1 5h2v2H1zM1 10h2v2H1z" fill="currentColor" stroke="none" />
      </Icon>
      <div className="ml-[15px] flex w-[506px] items-center rounded-full bg-[#f5f5f5] px-[3px] text-[#6b6b6b]">
        <Icon w={8} h={9}><path d="M7.500 0v9L.5 4.500z" fill="currentColor" stroke="none" /></Icon>
        <span className="mr-[5px] ml-auto h-[9px] w-[349px] rounded-full bg-[#6b6b6b]" />
        <Icon w={8} h={9}><path d="M.5 0v9l7-4.500z" fill="currentColor" stroke="none" /></Icon>
      </div>
      <span className="w-[22px]" />
    </nav>
  );
}

function StatusBar() {
  return (
    <footer className="flex h-[23px] shrink-0 items-center bg-[#f5f5f5] pt-px pr-2 pl-3 text-[11px] text-[#333]">
      <span>Point</span>
      <span className="ml-[15px]">Filter Mode</span>
      <button type="button" className="ml-5 flex items-center gap-1 font-semibold">
        <Icon w={15} h={14}>
          <circle cx="6" cy="2" r="1.500" />
          <path d="M.8 3.500c-.6 1 .5 1.500 3.200 2.500L2.500 12.500c.5 1 1.300.8 1.700 0L6 9M11.200 3.500c.6 1-.5 1.500-3.200 2.500v2M1 3.500l3 1h4l3-1" />
          <path d="m8 8 6 5.500M14 8l-6 5.500" strokeWidth="1.200" />
        </Icon>
        Accessibility: Investigate
      </button>
      <div className="ml-auto flex items-center text-[#a6a6a6]">
        <button type="button" aria-label="Normal view">
          <Icon w={13}><path d="M.5.5h12v12H.5zM.5 4.500h12M.5 8.500h12M4.500.5v12M8.500.5v12" /></Icon>
        </button>
        <button type="button" aria-label="Page layout view" className="ml-[27px]">
          <Icon w={14} h={13}><path d="M.5.5h13v12H.5zM3.500 2.500h7v8h-7zM5 4.500h4M5 6.500h4M5 8.500h4" /></Icon>
        </button>
        <button type="button" aria-label="Page break view" className="ml-[26px]">
          <Icon w={14} h={13}><path d="M.5.5h13v12H.5zM4.500.5v7h5v-7M9.500.5v3" /></Icon>
        </button>
        <button type="button" aria-label="Zoom out" className="ml-[19px]">
          <Icon w={9}><path d="M0 4.500h9" /></Icon>
        </button>
        <input
          type="range"
          aria-label="Zoom"
          min="10"
          max="190"
          defaultValue="100"
          className="mx-1 h-px w-[100px] appearance-none bg-[#666] [&::-webkit-slider-thumb]:h-[5px] [&::-webkit-slider-thumb]:w-px [&::-webkit-slider-thumb]:appearance-none [&::-webkit-slider-thumb]:bg-[#333]"
        />
        <button type="button" aria-label="Zoom in">
          <Icon w={9}><path d="M0 4.500h9M4.500 0v9" /></Icon>
        </button>
        <span className="ml-3 text-[#b5b5b5]">100%</span>
      </div>
    </footer>
  );
}

function Task({ label, line = true, active = false, children }: { label: string; line?: boolean; active?: boolean; children: ReactNode }) {
  return (
    <button type="button" aria-label={label} className={`relative flex h-10 w-[49px] shrink-0 items-center justify-center ${active ? "bg-[#454545]" : ""}`}>
      {children}
      {line && <span className={`absolute bottom-0 h-[2px] bg-[#76b9ed] ${active ? "inset-x-0" : "inset-x-1"}`} />}
    </button>
  );
}

function Chrome({ badge, photo = false }: { badge: string; photo?: boolean }) {
  return (
    <svg width="26" height="26" viewBox="0 0 26 26" aria-hidden="true">
      <circle cx="12" cy="12" r="11.500" fill="#fcc934" />
      <path d="M2 6.200A11.500 11.500 0 0 1 22 6.300L12 7l-3 8z" fill="#ea4335" />
      <path d="M2 6.200 7.500 15 14 17l-2 6.500A11.500 11.500 0 0 1 2 6.200z" fill="#34a853" />
      <circle cx="12" cy="12" r="5.400" fill="#fff" />
      <circle cx="12" cy="12" r="4.200" fill="#1a73e8" />
      {photo ? (
        <>
          <circle cx="18.500" cy="18.500" r="7.500" fill="#111" />
          <path d="M15.500 26c.3-5 1-8.500 3-8.500s2.500 3.500 2.500 8z" fill="#8c8c8c" />
          <circle cx="18.500" cy="15.500" r="1.800" fill="#d8b8a0" />
        </>
      ) : (
        <>
          <circle cx="18.500" cy="18.500" r="7.500" fill={badge} />
          <circle cx="18.500" cy="18.500" r="5.300" fill="none" stroke="#fff" strokeWidth="1.200" />
          <circle cx="18.500" cy="17" r="2" fill="none" stroke="#fff" strokeWidth="1.200" />
          <path d="M14.800 22c1.700-2 5.700-2 7.400 0" fill="none" stroke="#fff" strokeWidth="1.200" />
        </>
      )}
    </svg>
  );
}

function Taskbar() {
  return (
    <div className="flex h-10 shrink-0 items-center bg-[#1c1c1c] text-white">
      <button type="button" aria-label="Start" className="flex h-10 w-12 items-center justify-center">
        <svg width="16" height="16" viewBox="0 0 16 16" fill="#fff" aria-hidden="true">
          <path d="M0 2.300 6.500 1.400v6.200H0zM7.300 1.300 16 0v7.600H7.300zM0 8.400h6.500v6.200L0 13.700zM7.300 8.400H16V16l-8.700-1.300z" />
        </svg>
      </button>
      <label className="flex h-10 w-72 items-center gap-3 border border-[#d0d0d0] bg-[#f2f2f2] px-[11px] text-[#2b2b2b]">
        <Icon w={16}>
          <circle cx="10" cy="6" r="5.300" strokeWidth="1.300" />
          <path d="M6.200 9.800.8 15.200" strokeWidth="1.300" />
        </Icon>
        <input aria-label="Type here to search" placeholder="Type here to search" className="w-full bg-transparent text-sm outline-none placeholder:text-[#444]" />
      </label>
      <button type="button" aria-label="Task view" className="flex h-10 w-[51px] items-center justify-center pr-[2px]">
        <Icon w={16} h={17}>
          <path d="M.5 0v3.500h11V0M.5 17v-3.500h11V17M.5 5.500h11v6H.5z" />
          <path d="M14.500 0v3M14.500 8v9" />
          <path d="M13.500 4h2v3h-2z" fill="#fff" stroke="none" />
        </Icon>
      </button>
      <Task label="Zoom">
        <svg width="26" height="26" viewBox="0 0 26 26" aria-hidden="true">
          <circle cx="13" cy="12.500" r="12" fill="#0b5cff" />
          <text x="13" y="16.500" fontSize="12" fontWeight="700" textAnchor="middle" fill="#fff" fontFamily="Open Sans, sans-serif">zm</text>
          <circle cx="21.500" cy="21.500" r="4" fill="#e8322b" />
        </svg>
      </Task>
      <Task label="File Explorer">
        <svg width="22" height="20" viewBox="0 0 22 20" aria-hidden="true">
          <path d="M0 1h8l2 2h12v16H0z" fill="#e8a820" />
          <path d="M0 5h22v14H0z" fill="#ffd766" />
          <path d="M4 19v-7h14v7h-4v-4H8v4z" fill="#3d8fd1" />
        </svg>
      </Task>
      <Task label="Outlook">
        <svg width="27" height="26" viewBox="0 0 27 26" aria-hidden="true">
          <path d="M8 1h15v17H8z" fill="#28a8ea" />
          <path d="M8 1h8v6H8zM16 7h7v6h-7z" fill="#0364b8" />
          <path d="M5 13l9-3 9 3v7H5z" fill="#1490df" />
          <rect x="0" y="5" width="13" height="13" rx="1.200" fill="#0f6cbd" />
          <text x="6.500" y="15.500" fontSize="11" fontWeight="700" textAnchor="middle" fill="#fff" fontFamily="Open Sans, sans-serif">O</text>
          <path d="M11 15h15.500v10H11z" fill="#f5c27d" />
          <path d="m11 15 7.800 6 7.700-6" fill="#fbe0b6" stroke="#d28a35" />
        </svg>
      </Task>
      <Task label="Chrome"><Chrome badge="#6f7f8a" /></Task>
      <Task label="Chrome"><Chrome badge="#d81b4a" /></Task>
      <Task label="Chrome"><Chrome badge="#111111" photo /></Task>
      <Task label="Chrome"><Chrome badge="#1f6fe0" /></Task>
      <Task label="Chrome"><Chrome badge="#d81b4a" /></Task>
      <Task label="Excel" active><ExcelLogo size={23} /></Task>
      <Task label="Calculator" line={false}>
        <svg width="18" height="24" viewBox="0 0 18 24" aria-hidden="true">
          <rect width="18" height="24" rx="1" fill="#5b6b7c" />
          <path d="M2 2h14v5H2z" fill="#4fc3e0" />
          <path d="M2 9h4v4H2zM7 9h4v4H7zM12 9h4v4h-4zM2 14h4v4H2zM7 14h4v4H7zM2 19h4v3H2zM7 19h4v3H7z" fill="#e6e9ec" />
          <path d="M12 14h4v8h-4z" fill="#1e4f80" />
        </svg>
      </Task>
      <Task label="Hexagon app">
        <svg width="22" height="22" viewBox="0 0 22 22" aria-hidden="true">
          <path d="M5.500 1h11L22 11l-5.500 10h-11L0 11z" fill="#4aa3a2" />
          <path d="M5.500 1h11L14 6H8L5 11H0z" fill="#7fcac6" />
          <path d="M22 11l-5.500 10h-11L8 16h6l3-5z" fill="#2b7f86" />
          <path d="m8 6 6 0 3 5-3 5H8l-3-5z" fill="#8fd3cf" />
          <path d="m11 6.500 4 4.500-4 4.500z" fill="#123f4a" />
        </svg>
      </Task>
      <div className="ml-auto flex h-10 items-center">
        <Icon w={12} h={7}><path d="m.5 6.500 5.500-5.500 5.500 5.500" strokeWidth="1.300" /></Icon>
        <Icon w={17} h={16} className="ml-[10px]">
          <path d="m1 2.500 14.500-2v9M1 2.500v11l9 1" strokeWidth="1.300" />
          <path d="M5 7c1-2.500 4.500-2.500 5.500-.5V4M10.500 8.500c-1 2.500-4.500 2.500-5.500.5v2.500" strokeWidth="1.100" />
          <circle cx="13" cy="12.500" r="3.500" fill="#e81123" stroke="none" />
        </Icon>
        <Icon w={17} h={14} className="ml-[7px]">
          <path d="M5.500 4.500h9v7h-9zM15.500 6.500v3" strokeWidth="1.300" />
          <path d="M8 6h5v4H7z" fill="#fff" />
          <path d="M1 2h4v3.500L3 7 1 5.500zM2 0v2M4.500 0v2M3 7v3h2" />
        </Icon>
        <Icon w={16} h={14} className="ml-2">
          <path d="M4 2.500h11.500v8H4M3.500 5v5.500M8.500 10.500v3M5 13.500h7" />
          <path d="M.5.5h4v4h-4z" fill="#1c1c1c" />
        </Icon>
        <Icon w={17} h={14} className="ml-2">
          <path d="M.5 4.500h3l4-3.500v12l-4-3.500h-3zM9.500 5c1 1.500 1 3 0 4.500M11.500 3c2 2.500 2 5.500 0 8M13.500 1c3 3.500 3 8.500 0 12" />
        </Icon>
        <div className="ml-2 w-[56px] text-center text-[11px] leading-[18px] whitespace-nowrap">
          <div>7:22 PM</div>
          <div>7/16/2025</div>
        </div>
        <button type="button" aria-label="Notifications" className="relative ml-4 flex h-10 w-[41px] items-center">
          <Icon w={16} h={16}>
            <path d="M0 0h16v12H7l-3 3.500V12H0z" fill="#fff" stroke="none" />
            <path d="M2.500 3.500h11M2.500 6h11M2.500 8.500h11" stroke="#1c1c1c" />
          </Icon>
          <span className="absolute top-[17px] left-[5px] flex size-5 items-center justify-center rounded-full border border-[#8a8a8a] bg-[#333] text-xs">22</span>
        </button>
      </div>
    </div>
  );
}

export default function App() {
  return (
    <div className="flex h-screen flex-col overflow-hidden bg-[#f0f0f0] font-['Open_Sans','Noto_Sans',sans-serif]">
      <TitleBar />
      <TabBar />
      <div className="mx-2 shrink-0">
        <Ribbon />
        <WarningBar />
      </div>
      <FormulaBar />
      <Grid />
      <SheetTabs />
      <StatusBar />
      <Taskbar />
    </div>
  );
}
